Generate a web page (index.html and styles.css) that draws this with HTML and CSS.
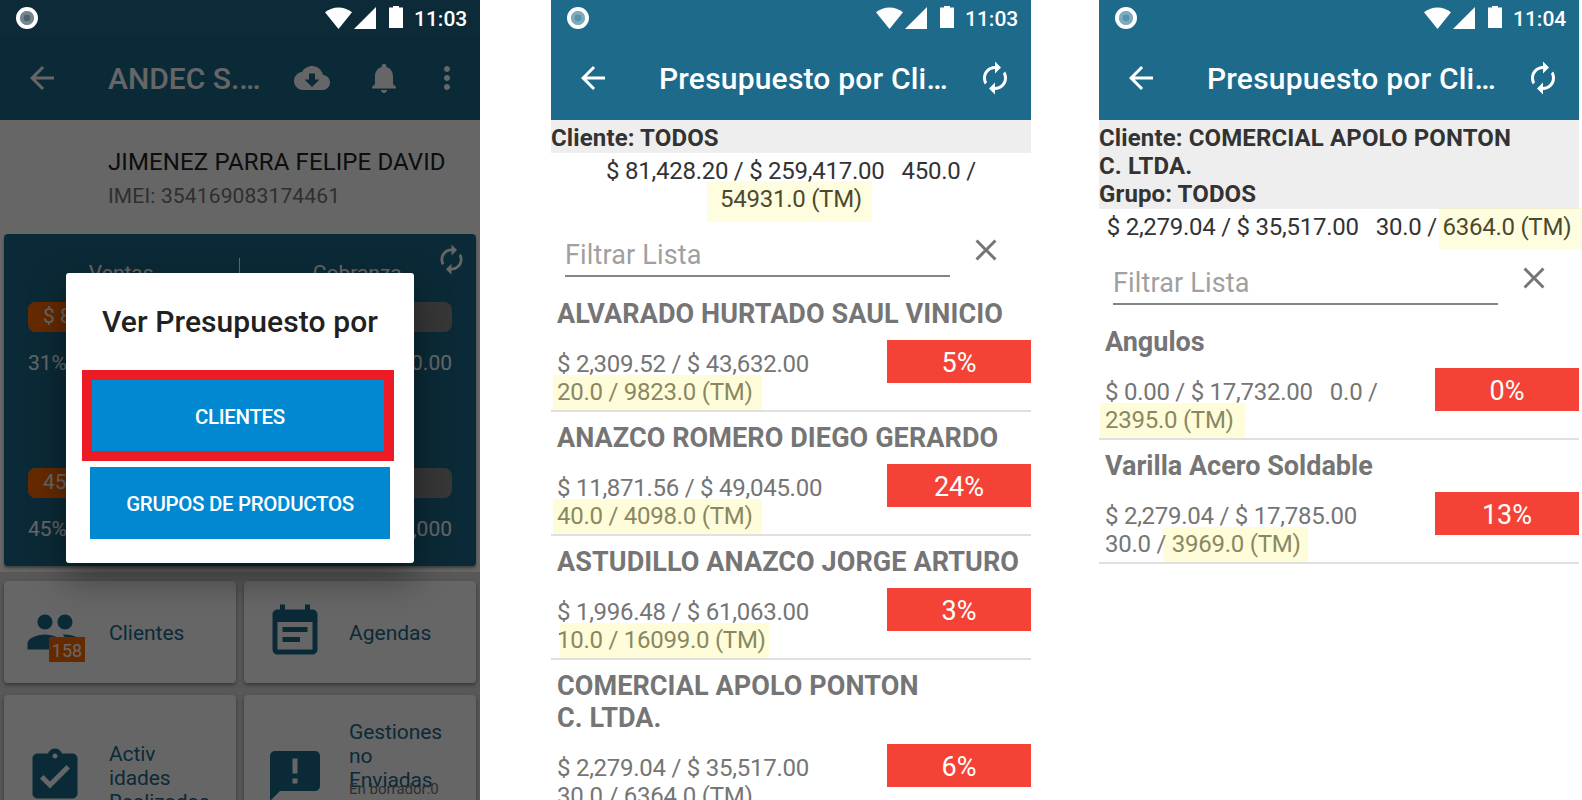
FILE: index.html
```html
<!DOCTYPE html>
<html lang="es">
<head>
  <meta charset="UTF-8">
  <title>Presupuesto por Cliente</title>
  <meta name="viewport" content="width=device-width, initial-scale=1.0">
  <link rel="stylesheet" href="styles.css">
</head>
<body>
  <!-- Iconos compartidos -->
  <svg class="sprite" aria-hidden="true">
    <symbol id="i-back" viewBox="0 0 24 24"><path d="M20 11H7.83l5.59-5.59L12 4l-8 8 8 8 1.41-1.41L7.83 13H20v-2z"/></symbol>
    <symbol id="i-renew" viewBox="0 0 24 24"><path d="M12 6v3l4-4-4-4v3c-4.42 0-8 3.58-8 8 0 1.57.46 3.03 1.24 4.26L6.7 14.8c-.45-.83-.7-1.79-.7-2.8 0-3.31 2.69-6 6-6zm6.76 1.74L17.3 9.2c.44.84.7 1.79.7 2.8 0 3.31-2.69 6-6 6v-3l-4 4 4 4v-3c4.42 0 8-3.58 8-8 0-1.57-.46-3.03-1.24-4.26z"/></symbol>
    <symbol id="i-close" viewBox="0 0 24 24"><path d="M19 6.41L17.59 5 12 10.59 6.41 5 5 6.41 10.59 12 5 17.59 6.41 19 12 13.41 17.59 19 19 17.59 13.41 12z"/></symbol>
    <symbol id="i-status" viewBox="0 0 80 24">
      <path d="M0 6.3C8-.2 19-.2 27 6.3L13.5 23z"/>
      <path d="M51 1v22H29z"/>
      <path d="M64 1.500h4V0h6v1.500h4V22H64z"/>
    </symbol>
    <symbol id="i-cam" viewBox="0 0 22 22">
      <circle cx="11" cy="11" r="9" fill="none" stroke="#fff" stroke-width="4"/>
      <circle cx="11" cy="11" r="5.100" fill="none" stroke="#fff" stroke-opacity=".43" stroke-width="3.800"/>
      <circle cx="11" cy="11" r="3.200" fill="#fff" fill-opacity=".27"/>
    </symbol>
  </svg>

  <main class="pantallas">
    <!-- Inicio con el dialogo abierto -->
    <section class="phone inicio">
      <div class="status">
        <svg class="cam"><use href="#i-cam"/></svg>
        <svg class="senal"><use href="#i-status"/></svg>
        <span class="hora">11:03</span>
      </div>
      <header class="toolbar">
        <svg class="icon"><use href="#i-back"/></svg>
        <h1>ANDEC S.…</h1>
        <svg class="icon nube" viewBox="0 0 24 24"><path d="M19.35 10.04C18.67 6.59 15.64 4 12 4 9.110 4 6.600 5.640 5.350 8.040 2.340 8.360 0 10.910 0 14c0 3.310 2.690 6 6 6h13c2.760 0 5-2.240 5-5 0-2.640-2.050-4.780-4.650-4.960zM17 13l-5 5-5-5h3V9h4v4h3z"/></svg>
        <svg class="icon campana" viewBox="0 0 24 24"><path d="M12 22c1.100 0 2-.9 2-2h-4c0 1.100.89 2 2 2zm6-6v-5c0-3.070-1.640-5.640-4.500-6.320V4c0-.83-.67-1.500-1.500-1.500s-1.500.67-1.500 1.500v.68C7.630 5.360 6 7.920 6 11v5l-2 2v1h16v-1l-2-2z"/></svg>
        <svg class="icon puntos" viewBox="0 0 24 24"><path d="M12 8c1.100 0 2-.9 2-2s-.9-2-2-2-2 .9-2 2 .9 2 2 2zm0 2c-1.100 0-2 .9-2 2s.9 2 2 2 2-.9 2-2-.9-2-2-2zm0 6c-1.100 0-2 .9-2 2s.9 2 2 2 2-.9 2-2-.9-2-2-2z"/></svg>
      </header>
      <div class="usuario">
        <p class="nombre">JIMENEZ PARRA FELIPE DAVID</p>
        <p class="imei">IMEI: 354169083174461</p>
      </div>
      <div class="resumen-zona">
        <div class="resumen">
          <div class="tabs"><span>Ventas</span><span>Cobranza</span></div>
          <svg class="icon renovar"><use href="#i-renew"/></svg>
          <div class="barra"><div class="avance" style="width:31%">$ 81,428</div></div>
          <div class="pie"><span>31%</span><span>$ 260,000.00</span></div>
          <div class="barra segunda"><div class="avance" style="width:45%">450.0</div></div>
          <div class="pie"><span>45%</span><span>1,000</span></div>
        </div>
      </div>
      <div class="menu">
        <div class="tarjeta">
          <svg class="grande" viewBox="0 0 24 24"><path d="M16 11c1.660 0 2.990-1.340 2.990-3S17.660 5 16 5c-1.660 0-3 1.340-3 3s1.340 3 3 3zm-8 0c1.660 0 2.990-1.340 2.990-3S9.660 5 8 5C6.340 5 5 6.340 5 8s1.340 3 3 3zm0 2c-2.330 0-7 1.170-7 3.500V19h14v-2.500c0-2.330-4.670-3.500-7-3.500zm8 0c-.29 0-.62.02-.97.05 1.160.84 1.970 1.970 1.970 3.450V19h6v-2.500c0-2.330-4.670-3.500-7-3.500z"/></svg>
          <span class="conteo">158</span>
          <span class="texto">Clientes</span>
        </div>
        <div class="tarjeta">
          <svg class="grande" viewBox="0 0 24 24"><path d="M17 10H7v2h10v-2zm2-7h-1V1h-2v2H8V1H6v2H5c-1.110 0-1.990.9-1.990 2L3 19c0 1.100.89 2 2 2h14c1.100 0 2-.9 2-2V5c0-1.100-.9-2-2-2zm0 16H5V8h14v11zm-5-5H7v2h7v-2z"/></svg>
          <span class="texto">Agendas</span>
        </div>
        <div class="tarjeta alta">
          <svg class="grande" viewBox="0 0 24 24"><path d="M19 3h-4.180C14.400 1.840 13.300 1 12 1c-1.300 0-2.400.84-2.820 2H5c-1.100 0-2 .9-2 2v14c0 1.100.9 2 2 2h14c1.100 0 2-.9 2-2V5c0-1.100-.9-2-2-2zm-7 0c.55 0 1 .45 1 1s-.45 1-1 1-1-.45-1-1 .45-1 1-1zm-2 14l-4-4 1.410-1.410L10 14.170l6.590-6.590L18 9l-8 8z"/></svg>
          <span class="texto actividades">Activ<br>idades<br>Realizadas</span>
        </div>
        <div class="tarjeta alta">
          <svg class="grande" viewBox="0 0 24 24"><path d="M20 2H4c-1.100 0-1.990.9-1.990 2L2 22l4-4h14c1.100 0 2-.9 2-2V4c0-1.100-.9-2-2-2zm-7 13h-2v-2h2v2zm0-4h-2V5h2v6z"/></svg>
          <span class="texto gestiones">Gestiones<br>no<br>Enviadas</span>
          <span class="borrador">En borrador:0</span>
        </div>
      </div>
      <div class="fondo"></div>
      <div class="dialogo">
        <h2>Ver Presupuesto por</h2>
        <button class="opcion marcada">CLIENTES</button>
        <button class="opcion">GRUPOS DE PRODUCTOS</button>
      </div>
    </section>

    <!-- Presupuesto por clientes -->
    <section class="phone clientes">
      <div class="status">
        <svg class="cam"><use href="#i-cam"/></svg>
        <svg class="senal"><use href="#i-status"/></svg>
        <span class="hora">11:03</span>
      </div>
      <header class="toolbar">
        <svg class="icon"><use href="#i-back"/></svg>
        <h1>Presupuesto por Cli…</h1>
        <svg class="icon sync"><use href="#i-renew"/></svg>
      </header>
      <div class="cabecera">Cliente: TODOS</div>
      <div class="total">$ 81,428.20 / $ 259,417.00 &nbsp; 450.0 /<br><span class="marca m-total">54931.0 (TM)</span></div>
      <div class="filtro">
        <input type="text" placeholder="Filtrar Lista">
        <svg class="icon"><use href="#i-close"/></svg>
      </div>
      <ul class="lista">
        <li>
          <h3>ALVARADO HURTADO SAUL VINICIO</h3>
          <div class="fila">
            <p>$ 2,309.52 / $ 43,632.00<br><span class="marca">20.0 / 9823.0 (TM)</span></p>
            <span class="porc">5%</span>
          </div>
        </li>
        <li>
          <h3>ANAZCO ROMERO DIEGO GERARDO</h3>
          <div class="fila">
            <p>$ 11,871.56 / $ 49,045.00<br><span class="marca">40.0 / 4098.0 (TM)</span></p>
            <span class="porc">24%</span>
          </div>
        </li>
        <li>
          <h3>ASTUDILLO ANAZCO JORGE ARTURO</h3>
          <div class="fila">
            <p>$ 1,996.48 / $ 61,063.00<br><span class="marca m-corrida">10.0 / 16099.0 (TM)</span></p>
            <span class="porc">3%</span>
          </div>
        </li>
        <li>
          <h3>COMERCIAL APOLO PONTON<br>C. LTDA.</h3>
          <div class="fila">
            <p>$ 2,279.04 / $ 35,517.00<br>30.0 / 6364.0 (TM)</p>
            <span class="porc">6%</span>
          </div>
        </li>
      </ul>
    </section>

    <!-- Detalle de un cliente por grupo -->
    <section class="phone detalle">
      <div class="status">
        <svg class="cam"><use href="#i-cam"/></svg>
        <svg class="senal"><use href="#i-status"/></svg>
        <span class="hora">11:04</span>
      </div>
      <header class="toolbar">
        <svg class="icon"><use href="#i-back"/></svg>
        <h1>Presupuesto por Cli…</h1>
        <svg class="icon sync"><use href="#i-renew"/></svg>
      </header>
      <div class="cabecera">Cliente: COMERCIAL APOLO PONTON<br>C. LTDA.<br>Grupo: TODOS</div>
      <div class="total">$ 2,279.04 / $ 35,517.00 &nbsp; 30.0 / <span class="marca m-detalle">6364.0 (TM)</span></div>
      <div class="filtro">
        <input type="text" placeholder="Filtrar Lista">
        <svg class="icon"><use href="#i-close"/></svg>
      </div>
      <ul class="lista">
        <li>
          <h3>Angulos</h3>
          <div class="fila">
            <p>$ 0.00 / $ 17,732.00 &nbsp; 0.0 /<br><span class="marca m-grupo">2395.0 (TM)</span></p>
            <span class="porc">0%</span>
          </div>
        </li>
        <li>
          <h3>Varilla Acero Soldable</h3>
          <div class="fila">
            <p>$ 2,279.04 / $ 17,785.00<br>30.0 / <span class="marca m-grupo2">3969.0 (TM)</span></p>
            <span class="porc">13%</span>
          </div>
        </li>
      </ul>
    </section>
  </main>
</body>
</html>
```
FILE: styles.css
```css
:root {
  --azul: #1d6a8b;
  --boton: #0288d1;
  --rojo: #f44336;
  --naranja: #ff6a00;
  --gris: #757575;
}
* { box-sizing: border-box; margin: 0; padding: 0; }
body { height: 800px; overflow: hidden; background: #fff; font-family: Roboto, sans-serif; }
.sprite { position: absolute; width: 0; height: 0; }
.pantallas { display: flex; height: 800px; }
.phone { position: relative; flex: none; width: 480px; height: 800px; }
.clientes { margin-left: 71px; }
.detalle { margin-left: 68px; }

/* Barra de estado y toolbar */
.status { display: flex; align-items: center; height: 36px; padding-left: 16px; background: var(--azul); color: #fff; fill: #fff; }
.cam { width: 22px; height: 22px; }
.senal { width: 80px; height: 24px; margin-left: 287px; }
.hora { margin-left: 9px; font-size: 21px; font-weight: 500; line-height: 36px; padding-top: 1px; }
.toolbar { display: flex; align-items: center; height: 84px; padding-left: 24px; background: var(--azul); color: #fff; fill: #fff; }
.toolbar h1 { width: 186px; margin-left: 48px; padding-top: 2px; font-size: 30px; font-weight: 500; line-height: 36px; white-space: nowrap; }
.clientes h1, .detalle h1 { width: 318px; letter-spacing: .2px; }
.icon { flex: none; width: 36px; height: 36px; }
.campana { margin-left: 36px; }
.puntos { margin-left: 27px; }

/* Inicio */
.inicio { background: #ddd; height: 800px; overflow: hidden; }
.inicio .status { position: relative; z-index: 2; background: #0c2a37; }
.usuario { height: 114px; padding: 28px 0 0 108px; background: #fff; }
.nombre { font-size: 24px; line-height: 28px; letter-spacing: .12px; color: #212121; white-space: nowrap; }
.imei { margin-top: 8px; font-size: 21px; line-height: 25px; letter-spacing: .15px; color: #757575; }
.resumen-zona { height: 338px; padding: 0 4px; background: #fff; }
.resumen { position: relative; height: 332px; padding: 24px; border-radius: 4px; background: var(--azul); color: #fff; font-size: 21px; line-height: 25px; box-shadow: 0 2px 3px rgba(0,0,0,.4); }
.tabs { display: flex; height: 30px; margin: 0 -23px 0 -24px; }
.tabs span { width: 236px; padding-top: 3px; text-align: center; }
.tabs span:first-child { border-right: 1px solid #fff; }
.renovar { position: absolute; top: 9px; right: 8px; width: 33px; height: 33px; fill: #fff; }
.barra { height: 30px; margin-top: 14px; border-radius: 8px; background: #8b8b8b; overflow: hidden; }
.avance { height: 30px; padding-left: 15px; line-height: 29px; background: var(--naranja); white-space: nowrap; }
.segunda { margin-top: 92px; }
.pie { display: flex; justify-content: space-between; height: 25px; margin-top: 19px; }
.menu { display: grid; grid-template-columns: 232px 232px; gap: 12px 8px; padding: 9px 4px; }
.tarjeta { position: relative; display: flex; align-items: center; height: 102px; padding-left: 21px; border-radius: 4px; background: #fff; color: var(--azul); fill: var(--azul); box-shadow: 0 2px 4px rgba(0,0,0,.4); }
.alta { height: 162px; }
.grande { flex: none; width: 60px; height: 60px; }
.texto { margin-left: 24px; padding-top: 2px; font-size: 21px; line-height: 24px; }
.actividades, .gestiones { align-self: flex-start; padding-top: 47px; letter-spacing: -.1px; }
.gestiones { padding-top: 25px; }
.conteo { position: absolute; left: 45px; top: 56px; width: 36px; height: 25px; background: var(--naranja); color: #fff; font-size: 18px; line-height: 27px; text-align: center; }
.borrador { position: absolute; left: 105px; top: 85px; font-size: 15px; line-height: 18px; color: #757575; }

/* Dialogo */
.fondo { position: absolute; inset: 36px 0 0 0; background: rgba(0,0,0,.6); }
.dialogo { position: absolute; top: 273px; left: 66px; display: flex; flex-direction: column; gap: 15px; width: 348px; height: 290px; padding: 31px 24px 24px; border-radius: 3px; background: #fff; box-shadow: 0 14px 36px rgba(0,0,0,.42); }
.dialogo h2 { height: 61px; color: #212121; font-size: 30px; font-weight: 500; line-height: 36px; letter-spacing: .1px; text-align: center; white-space: nowrap; }
.opcion { position: relative; height: 72px; border: 0; background: var(--boton); color: #fff; font: 500 20.500px/74px Roboto, sans-serif; letter-spacing: -.33px; }
.marcada::after { content: ""; position: absolute; inset: -10px -4px -9px -8px; border: 10px solid #ed1c24; }

/* Listas de presupuesto */
.cabecera { padding: 4px 0 1px; background: #eee; color: #333; font-size: 24px; font-weight: 700; line-height: 28px; letter-spacing: .12px; }
.total { padding-top: 4px; color: #333; font-size: 24px; line-height: 28px; letter-spacing: -.26px; text-align: center; white-space: nowrap; }
.filtro { display: flex; height: 75px; padding: 19px 0 0 14px; }
.filtro input { width: 385px; height: 45px; padding: 7px 0 4px; border: 0; border-bottom: 2px solid #858585; background: none; color: #333; font: 27px/32px Roboto, sans-serif; letter-spacing: .15px; outline: 0; }
.filtro input::placeholder { color: #a0a0a0; }
.filtro .icon { margin-left: 18px; fill: var(--gris); }
.lista { list-style: none; color: var(--gris); }
.lista li { padding: 10px 0 4px; border-bottom: 2px solid #e0e0e0; }
.lista h3 { padding-left: 6px; font-size: 27px; font-weight: 700; line-height: 32px; white-space: nowrap; }
.clientes h3 { letter-spacing: .09px; }
.fila { display: flex; justify-content: space-between; padding-top: 10px; }
.fila p { padding: 10px 0 0 6px; font-size: 24px; line-height: 28px; letter-spacing: -.26px; white-space: nowrap; }
.porc { width: 144px; height: 43px; background: var(--rojo); color: #fff; font-size: 27px; line-height: 47px; text-align: center; }

/* Resaltador amarillo sobre las toneladas */
.marca { position: relative; display: inline-block; height: 28px; }
.marca::after { content: ""; position: absolute; left: -4px; top: -3px; width: 209px; height: 35px; background: rgba(255,242,0,.15); }
.m-corrida::after { left: 3px; }
.m-grupo::after { left: -5px; width: 145px; }
.m-grupo2::after { left: -9px; width: 145px; }
.m-total::after { left: -13px; top: -4px; width: 165px; height: 41px; background: rgba(255,242,0,.12); }
.m-detalle::after { left: -4px; top: -5px; width: 143px; height: 41px; background: rgba(255,242,0,.12); }
```
